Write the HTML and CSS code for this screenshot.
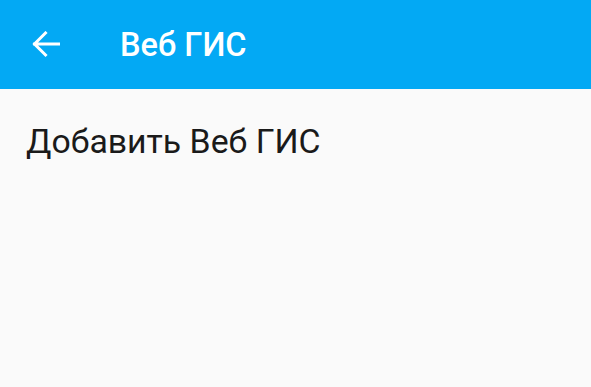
FILE: index.html
```html
<!DOCTYPE html>
<html>
<head>
<meta charset="utf-8">
<link rel="stylesheet" href="styles.css">
</head>
<body>
<div class="app">
  <header class="toolbar">
    <span class="back">
      <svg width="28" height="28" viewBox="0 0 28 28"><path d="M27 13H2.5M13.5 2L2.5 13l11 11" fill="none" stroke="#fff" stroke-width="3" stroke-linecap="square"/></svg>
    </span>
    <h1 class="title">Веб ГИС</h1>
  </header>
  <main class="content">
    <div class="item">Добавить Веб ГИС</div>
  </main>
</div>
</body>
</html>
```
FILE: styles.css
```css
html, body { margin: 0; padding: 0; }
body { background: #fafafa; font-family: Roboto, "Noto Sans", sans-serif; width: 591px; height: 387px; overflow: hidden; }
.toolbar { height: 89px; background: #03a9f4; display: flex; align-items: center; }
.back { width: 28px; height: 28px; margin-left: 32px; margin-top: 1px; display: flex; }
.title { margin: 0 0 0 60px; color: #fff; font-size: 32.5px; font-weight: 500; }
.content { padding: 33px 0 0 26px; }
.item { font-size: 33.8px; color: #1a1a1a; line-height: 40px; }
```
